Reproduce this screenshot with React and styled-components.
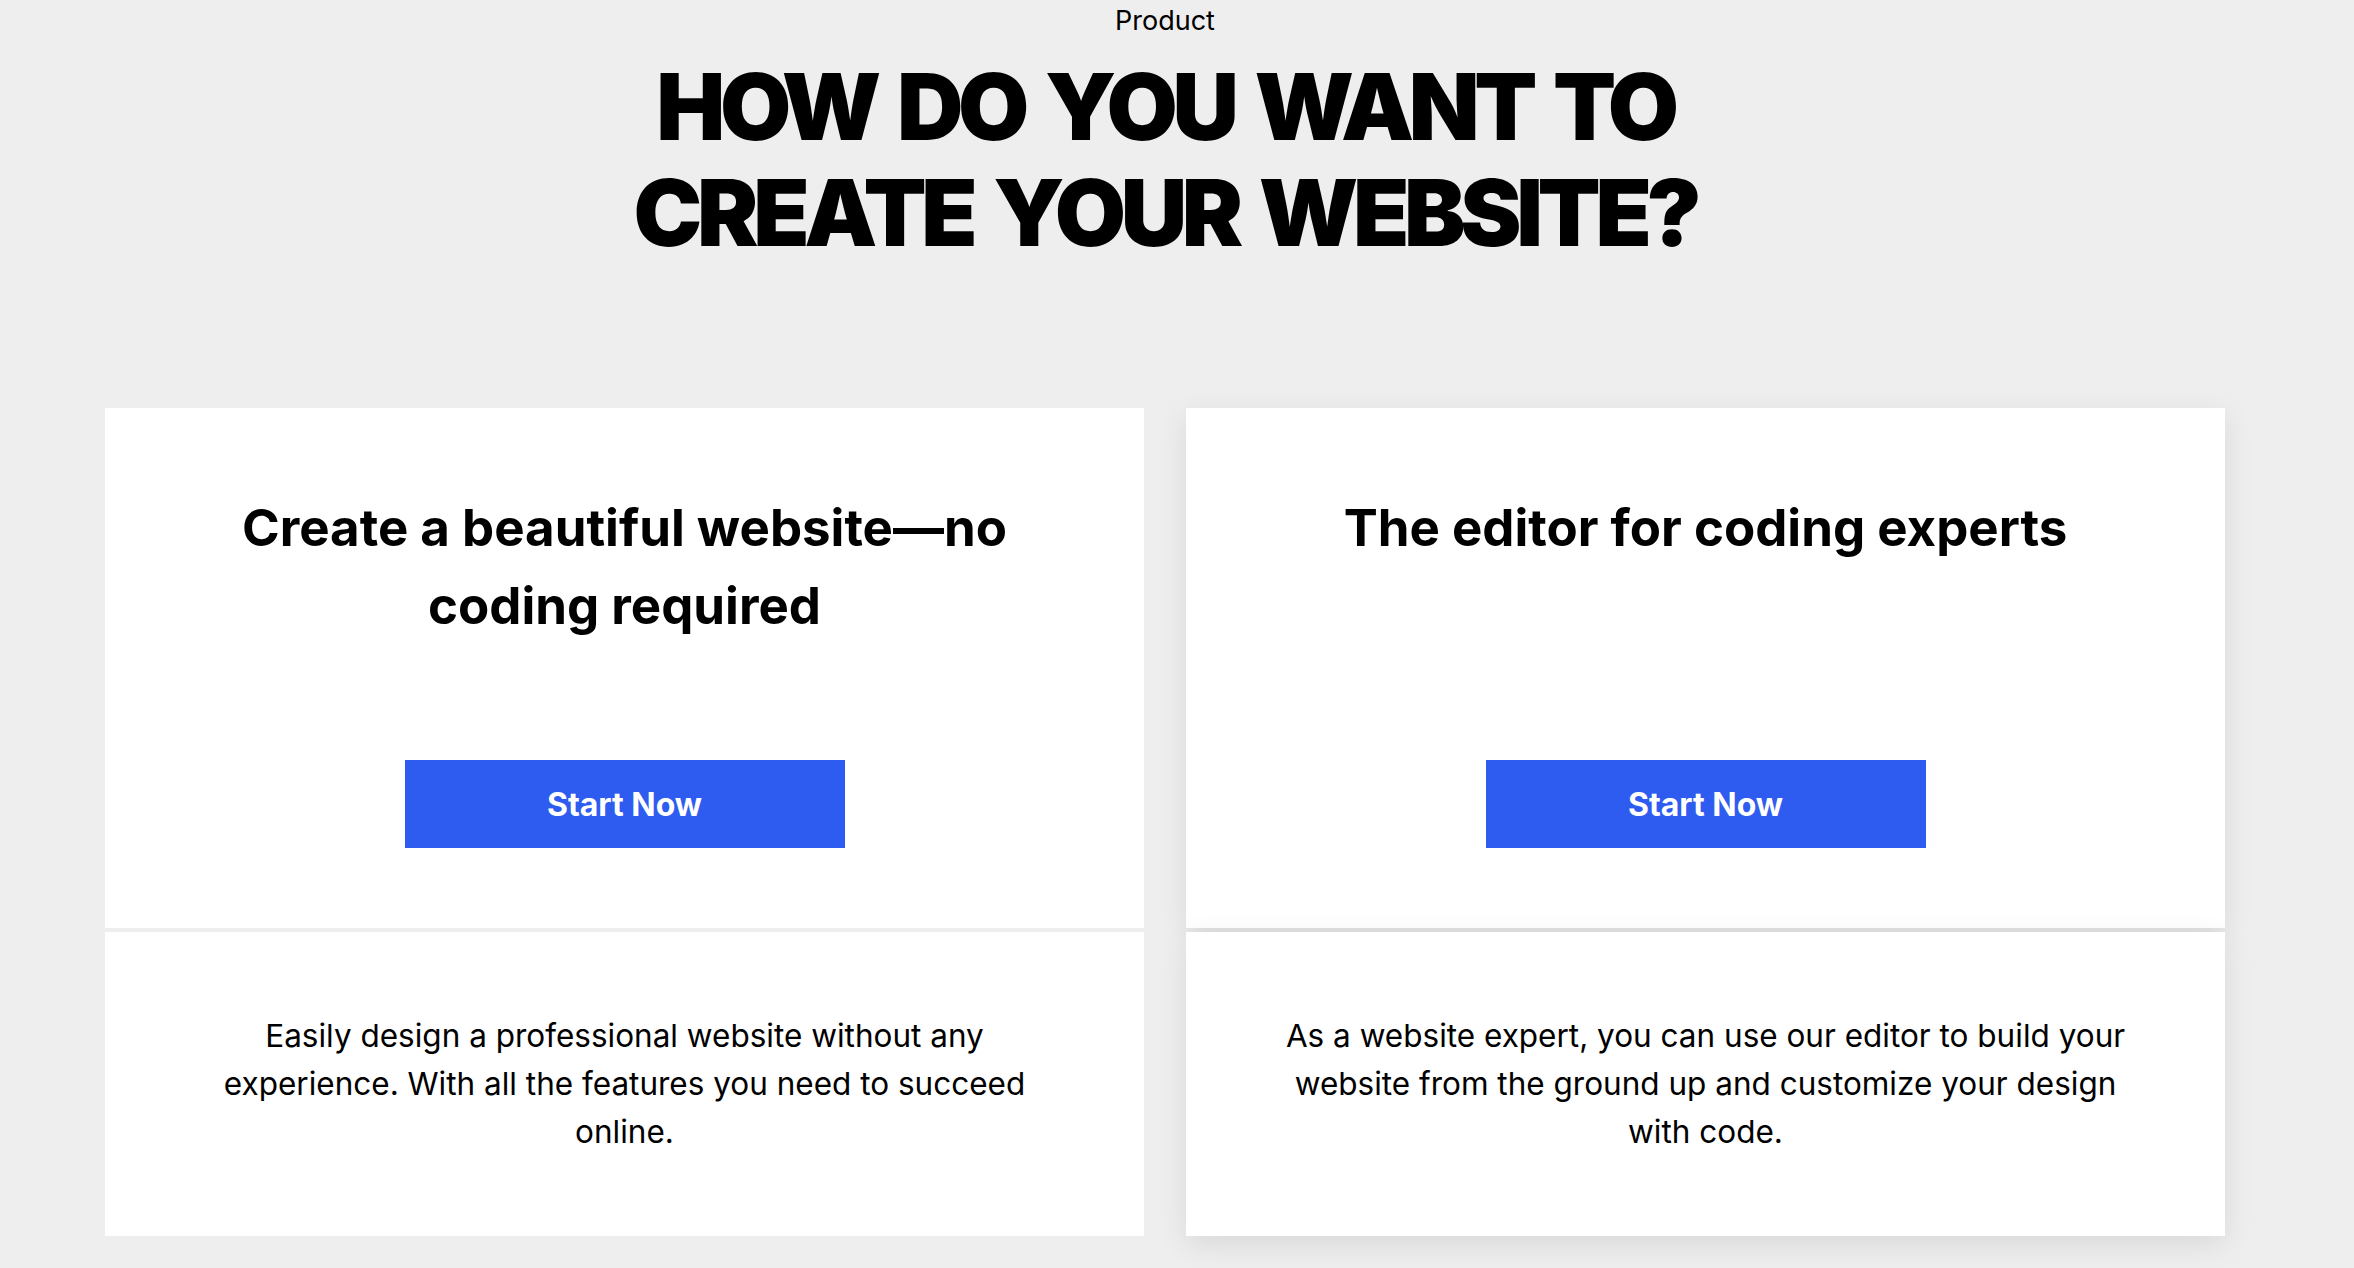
import React from 'react';
import styled, { createGlobalStyle } from 'styled-components';

const GlobalStyle = createGlobalStyle`
  html, body {
    margin: 0;
    padding: 0;
    background: #eeeeee;
  }

  body {
    font-family: Inter, "Noto Sans", sans-serif;
    color: #000;
  }
`;

// the reference leaves room for a scrollbar on the right, so content is centred in 2330px
const Page = styled.main`
  display: flex;
  flex-direction: column;
  align-items: center;
  padding: 5px 24px 0 0;
  min-height: 1268px;
  box-sizing: border-box;
`;

const Eyebrow = styled.div`
  font-size: 27px;
  line-height: 1.2;
  font-weight: 400;
`;

const Heading = styled.h1`
  margin: 17px 0 0;
  font-size: 92px;
  line-height: 106px;
  font-weight: 900;
  letter-spacing: -0.058em;
  word-spacing: 8px;
  text-align: center;
  text-transform: uppercase;
`;

const Cards = styled.section`
  align-self: stretch;
  display: grid;
  grid-template-columns: 1fr 1fr;
  column-gap: 42px;
  padding: 0 105px;
  margin-top: 142px;
`;

const Card = styled.article`
  display: flex;
  flex-direction: column;
  gap: 4px;
`;

const Panel = styled.div`
  background: #fff;
  box-sizing: border-box;
  box-shadow: ${({ $raised }) => ($raised ? '0 8px 28px rgba(0, 0, 0, 0.09)' : 'none')};
`;

const Top = styled(Panel)`
  height: 520px;
  padding: 81px 90px 80px;
  display: flex;
  flex-direction: column;
  align-items: center;
  justify-content: space-between;
`;

const Title = styled.h2`
  margin: 0;
  font-size: 51px;
  line-height: 78px;
  font-weight: 700;
  text-align: center;
`;

const Button = styled.button`
  width: 440px;
  height: 88px;
  border: 0;
  border-radius: 0;
  background: #2e5bf0;
  color: #fff;
  font-family: inherit;
  font-size: 32px;
  font-weight: 700;
  cursor: pointer;
`;

const Bottom = styled(Panel)`
  height: 304px;
  padding: 0 95px;
  display: flex;
  align-items: center;
  justify-content: center;
`;

const Text = styled.p`
  margin: 0;
  font-size: 31.5px;
  line-height: 48px;
  font-weight: 400;
  text-align: center;
`;

const options = [
  {
    title: 'Create a beautiful website—no coding required',
    text: 'Easily design a professional website without any experience. With all the features you need to succeed online.',
  },
  {
    title: 'The editor for coding experts',
    text: 'As a website expert, you can use our editor to build your website from the ground up and customize your design with code.',
    raised: true,
  },
];

export default function App() {
  return (
    <>
      <GlobalStyle />
      <Page>
        <Eyebrow>Product</Eyebrow>
        <Heading>
          How do you want to
          <br />
          create your website?
        </Heading>
        <Cards>
          {options.map((o) => (
            <Card key={o.title}>
              <Top $raised={o.raised}>
                <Title>{o.title}</Title>
                <Button>Start Now</Button>
              </Top>
              <Bottom $raised={o.raised}>
                <Text>{o.text}</Text>
              </Bottom>
            </Card>
          ))}
        </Cards>
      </Page>
    </>
  );
}
